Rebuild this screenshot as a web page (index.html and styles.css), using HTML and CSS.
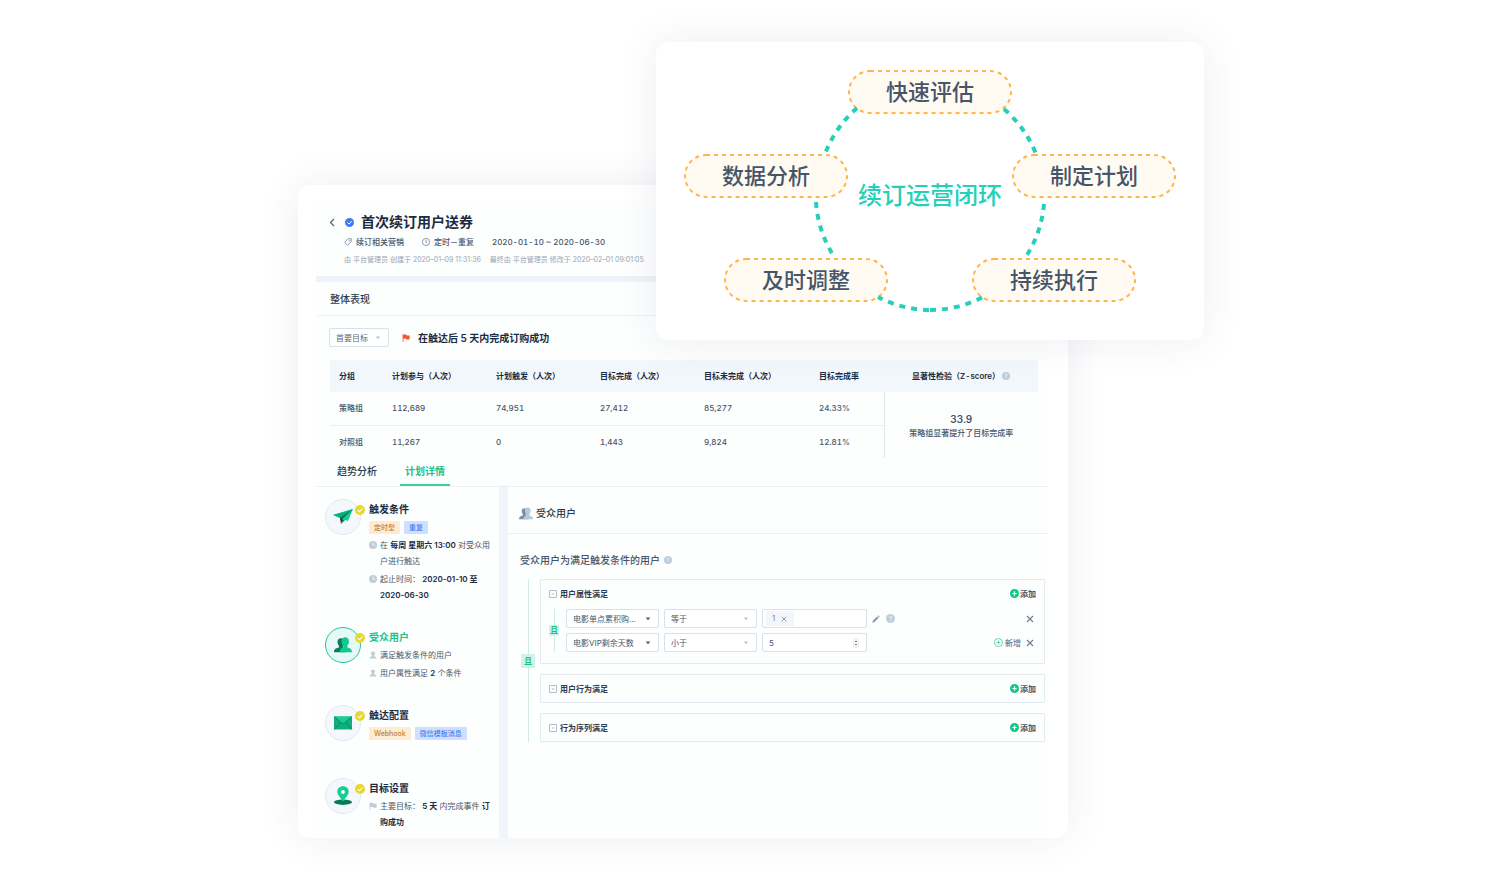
FILE: index.html
```html
<!DOCTYPE html>
<html lang="zh-CN">
<head>
<meta charset="utf-8">
<meta name="viewport" content="width=device-width, initial-scale=1">
<title>首次续订用户送券</title>
<link rel="stylesheet" href="styles.css">
</head>
<body>
<svg class="sprite" aria-hidden="true">
  <symbol id="i-check" viewBox="0 0 10 10"><circle cx="5" cy="5" r="5" fill="currentColor"/><path d="M2.7 5.1l1.7 1.7 3-3.3" fill="none" stroke="#fff" stroke-width="1.1"/></symbol>
  <symbol id="i-clock-solid" viewBox="0 0 8 8"><circle cx="4" cy="4" r="4" fill="currentColor"/><path d="M4 1.6V4.2H6.2" fill="none" stroke="#fff" stroke-width=".8"/></symbol>
  <symbol id="i-user" viewBox="0 0 8 8"><path d="M4 .4c1.300 0 2 .9 2 2.100 0 .9-.4 1.600-1 2v.7c1.500.4 2.500.8 2.500 2.400h-7c0-1.600 1-2 2.500-2.400v-.7c-.6-.4-1-1.100-1-2C2 1.300 2.700.4 4 .4z" fill="currentColor"/></symbol>
  <symbol id="i-help" viewBox="0 0 8 8"><circle cx="4" cy="4" r="4" fill="currentColor"/><path d="M2.900 3.200c0-.7.5-1.100 1.100-1.100s1.100.4 1.100 1c0 .7-1 .8-1 1.500M4.100 5.300v.8" fill="none" stroke="#fff" stroke-width=".7"/></symbol>
  <symbol id="i-plus" viewBox="0 0 9 9"><circle cx="4.500" cy="4.500" r="4.500" fill="#0bc98b"/><path d="M4.500 2.300v4.400M2.300 4.500h4.400" stroke="#fff" stroke-width="1.200"/></symbol>
  <symbol id="i-plus-line" viewBox="0 0 9 9"><circle cx="4.500" cy="4.500" r="4" fill="none" stroke="#3ecf9d" stroke-width=".8"/><path d="M4.500 2.500v4M2.500 4.500h4" stroke="#3ecf9d" stroke-width=".8"/></symbol>
  <symbol id="i-close" viewBox="0 0 8 8"><path d="M1 1l6 6M7 1L1 7" stroke="currentColor" stroke-width="1.100"/></symbol>
  <symbol id="i-caret" viewBox="0 0 6 4"><path d="M.8.6h4.400L3 3.300z" fill="currentColor"/></symbol>
  <symbol id="i-minus-box" viewBox="0 0 8 8"><path d="M.5.5h7v7h-7zM2.700 4h2.600" fill="none" stroke="#a9b8c8" stroke-width=".9"/></symbol>
  <symbol id="i-pill" viewBox="0 0 164 44"><rect x="1" y="1" width="162" height="42" rx="21" fill="#fffaf2" stroke="#ffb44c" stroke-width="2" stroke-dasharray="4 4"/></symbol>
  <symbol id="i-people" viewBox="0 0 16 14"><path d="M6.200.900c1.900 0 3 1.300 3 3.300 0 1.500-.5 2.700-1.300 3.500v1.600c2 .5 3.100 1.600 3.100 4.200H0c0-2.600 1.300-3.500 4.400-4.200V7.700C3.600 6.900 3.100 5.700 3.100 4.200c0-2 1.100-3.300 3.100-3.300z" fill="var(--back)"/><path d="M10 .2c2.200 0 3.300 1.500 3.300 3.700 0 1.500-.5 2.800-1.400 3.600V9.200c2.600.6 4.100 1.500 4.100 4.300H5.200c0-2.800.9-3.700 3-4.300V7.500C7.300 6.700 6.800 5.400 6.800 3.900 6.800 1.700 7.900.2 10 .2z" fill="var(--front)"/></symbol>
</svg>

<div class="stage">
  <main class="panel">
    <div class="content">
      <header class="head">
        <div class="head-title">
          <button class="bare back" aria-label="返回"><svg class="i6x9" viewBox="0 0 6 9"><path d="M5 1L1.500 4.500 5 8" fill="none" stroke="currentColor" stroke-width="1.200"/></svg></button>
          <svg class="i9 blue"><use href="#i-check"/></svg>
          <h1>首次续订用户送券</h1>
        </div>
        <div class="head-meta">
          <span class="meta"><svg class="i8" viewBox="0 0 8 8"><path d="M4.100.8L7.300.6 7.200 3.700 3.600 7.300.7 4.300z" fill="none" stroke="currentColor" stroke-width=".8" stroke-linejoin="round"/><circle cx="5.500" cy="2.500" r=".6" fill="none" stroke="currentColor" stroke-width=".5"/></svg>续订相关营销</span>
          <span class="meta"><svg class="i8" viewBox="0 0 8 8"><circle cx="4" cy="4" r="3.600" fill="none" stroke="currentColor" stroke-width=".8"/><path d="M4 1.800v2.400l1.400.9" fill="none" stroke="currentColor" stroke-width=".8"/></svg>定时－重复</span>
          <span class="period">2020-01-10 ~ 2020-06-30</span>
        </div>
        <div class="head-log"><span>由 平台管理员 创建于 2020–01–09 11:31:36</span><span>最终由 平台管理员 修改于 2020–02–01 09:01:05</span></div>
      </header>

      <section class="overview">
        <h2 class="section-title">整体表现</h2>
        <div class="goal">
          <span class="select goal-select"><select aria-label="目标"><option>首要目标</option></select><svg class="caret pale"><use href="#i-caret"/></svg></span>
          <svg class="flag" viewBox="0 0 8 8"><path d="M.6.500h3.600l.5.9h2.900v4H4.500L4 4.800H1.400v3H.6z" fill="#ee5a2f"/></svg>
          <strong>在触达后 5 天内完成订购成功</strong>
        </div>
        <table class="stats">
          <colgroup><col class="c-name"><col class="c-num"><col class="c-num"><col class="c-num"><col class="c-wide"><col class="c-rate"><col class="c-score"></colgroup>
          <thead><tr><th>分组</th><th>计划参与（人次）</th><th>计划触发（人次）</th><th>目标完成（人次）</th><th>目标未完成（人次）</th><th>目标完成率</th><th class="score-head">显著性检验（Z-score）<svg class="i8 help grey"><use href="#i-help"/></svg></th></tr></thead>
          <tbody>
            <tr><td>策略组</td><td>112,689</td><td>74,951</td><td>27,412</td><td>85,277</td><td>24.33%</td><td class="score" rowspan="2"><b>33.9</b>策略组显著提升了目标完成率</td></tr>
            <tr><td>对照组</td><td>11,267</td><td>0</td><td>1,443</td><td>9,824</td><td>12.81%</td></tr>
          </tbody>
        </table>
      </section>

      <nav class="tabs"><button class="tab">趋势分析</button><button class="tab active">计划详情</button></nav>

      <div class="detail">
        <ol class="steps">
          <li class="step">
            <span class="disc"><svg class="art" viewBox="0 0 22 18"><path d="M1 7L21 1l-5 12-6-2z" fill="#14cf91"/><path d="M1 7L21 1 8 9.500z" fill="#0fae7b"/><path d="M8 9.500L21 1 10.500 11z" fill="#087a57"/><path d="M8 9.500l2.500 1.500L9 16z" fill="#101f2c"/><path d="M10.500 11l2.500 1-4 4z" fill="#087a57"/></svg><svg class="done"><use href="#i-check"/></svg></span>
            <div class="step-body">
              <h3>触发条件</h3>
              <div class="tags"><span class="tag amber">定时型</span><span class="tag azure">重复</span></div>
              <p><svg class="i8 grey"><use href="#i-clock-solid"/></svg><span>在 <b>每周 星期六 13:00</b> 对受众用户进行触达</span></p>
              <p><svg class="i8 grey"><use href="#i-clock-solid"/></svg><span>起止时间：&nbsp;<b>2020-01-10 至 2020-06-30</b></span></p>
            </div>
          </li>
          <li class="step current">
            <span class="disc"><svg class="art people-green" viewBox="0 0 22 18"><use href="#i-people" x="2" y="1" width="18" height="16"/></svg><svg class="done"><use href="#i-check"/></svg></span>
            <div class="step-body">
              <h3>受众用户</h3>
              <p><svg class="i8 grey"><use href="#i-user"/></svg><span>满足触发条件的用户</span></p>
              <p><svg class="i8 grey"><use href="#i-user"/></svg><span>用户属性满足 <b>2</b> 个条件</span></p>
            </div>
          </li>
          <li class="step">
            <span class="disc"><svg class="art" viewBox="0 0 22 18"><rect x="2" y="2.500" width="18" height="13" fill="#0fae7b"/><path d="M2 2.500h18L11 10z" fill="#14cf91"/><path d="M2 15.500l6.500-7.200M20 15.500l-6.500-7.200M2 2.500L11 10l9-7.500" fill="none" stroke="#087a57" stroke-width=".7"/></svg><svg class="done"><use href="#i-check"/></svg></span>
            <div class="step-body">
              <h3>触达配置</h3>
              <div class="tags"><span class="tag amber">Webhook</span><span class="tag azure">微信模板消息</span></div>
            </div>
          </li>
          <li class="step">
            <span class="disc"><svg class="art" viewBox="0 0 22 18"><ellipse cx="11" cy="15.200" rx="9" ry="2.700" fill="#087a57"/><path d="M11-.8c3.300 0 5.700 2.300 5.700 5.400 0 3.800-3.600 6.400-5.700 10.200C8.900 11 5.300 8.400 5.300 4.600 5.300 1.500 7.700-.8 11-.8z" fill="#14cf91"/><circle cx="11" cy="5" r="1.900" fill="#fff"/></svg><svg class="done"><use href="#i-check"/></svg></span>
            <div class="step-body">
              <h3>目标设置</h3>
              <p><svg class="i8 grey" viewBox="0 0 8 8"><path d="M.6.800h3.600l.5.9h2.900v4H4.500L4 5.100H1.400v2.700H.6z" fill="currentColor"/></svg><span>主要目标：&nbsp;<b>5 天</b> 内完成事件 <b>订购成功</b></span></p>
            </div>
          </li>
        </ol>

        <section class="audience">
          <h2 class="audience-title"><svg class="people-grey"><use href="#i-people"/></svg>受众用户</h2>
          <div class="audience-body">
            <h3 class="audience-label">受众用户为满足触发条件的用户<svg class="i8 grey"><use href="#i-help"/></svg></h3>
            <div class="tree">
              <div class="join"><span class="join-mark">且</span></div>
              <div class="groups">
                <div class="group">
                  <div class="group-head"><svg class="i8"><use href="#i-minus-box"/></svg><b>用户属性满足</b><button class="bare add"><svg class="i9"><use href="#i-plus"/></svg>添加</button></div>
                  <div class="rules">
                    <div class="join small"><span class="join-mark">且</span></div>
                    <div class="rule-list">
                      <div class="rule">
                        <span class="select"><select aria-label="属性"><option>电影单点累积购...</option></select><svg class="caret"><use href="#i-caret"/></svg></span>
                        <span class="select"><select aria-label="条件"><option>等于</option></select><svg class="caret pale"><use href="#i-caret"/></svg></span>
                        <span class="field"><span class="chip">1<button class="bare" aria-label="移除"><svg class="i6"><use href="#i-close"/></svg></button></span></span>
                        <button class="bare slate" aria-label="编辑"><svg class="i8" viewBox="0 0 8 8"><path d="M.3 7.700l.5-2L5 1.500 6.500 3 2.300 7.200zM5.500 1l.7-.7 1.500 1.500-.7.7z" fill="currentColor"/></svg></button>
                        <svg class="i9 grey hint"><use href="#i-help"/></svg>
                        <span class="rule-end"><button class="bare" aria-label="删除"><svg class="i8"><use href="#i-close"/></svg></button></span>
                      </div>
                      <div class="rule">
                        <span class="select"><select aria-label="属性"><option>电影VIP剩余天数</option></select><svg class="caret"><use href="#i-caret"/></svg></span>
                        <span class="select"><select aria-label="条件"><option>小于</option></select><svg class="caret pale"><use href="#i-caret"/></svg></span>
                        <span class="field"><input type="text" inputmode="numeric" value="5" aria-label="天数"><svg class="spin" viewBox="0 0 6 10"><rect x=".4" y=".4" width="5.200" height="9.200" rx="2.600" fill="#fff" stroke="#d5dce4" stroke-width=".7"/><path d="M1.600 4L3 2.400 4.400 4zM1.600 6L3 7.600 4.400 6z" fill="#5c6670"/></svg></span>
                        <span class="rule-end"><button class="bare new"><svg class="i9"><use href="#i-plus-line"/></svg>新增</button><button class="bare" aria-label="删除"><svg class="i8"><use href="#i-close"/></svg></button></span>
                      </div>
                    </div>
                  </div>
                </div>
                <div class="group"><div class="group-head"><svg class="i8"><use href="#i-minus-box"/></svg><b>用户行为满足</b><button class="bare add"><svg class="i9"><use href="#i-plus"/></svg>添加</button></div></div>
                <div class="group"><div class="group-head"><svg class="i8"><use href="#i-minus-box"/></svg><b>行为序列满足</b><button class="bare add"><svg class="i9"><use href="#i-plus"/></svg>添加</button></div></div>
              </div>
            </div>
          </div>
        </section>
      </div>
    </div>
  </main>

  <aside class="cycle">
    <div class="cycle-map">
      <ul>
        <li class="node n1"><svg><use href="#i-pill"/></svg><span>快速评估</span></li>
        <li class="node n2"><svg><use href="#i-pill"/></svg><span>制定计划</span></li>
        <li class="node n3"><svg><use href="#i-pill"/></svg><span>持续执行</span></li>
        <li class="node n4"><svg><use href="#i-pill"/></svg><span>及时调整</span></li>
        <li class="node n5"><svg><use href="#i-pill"/></svg><span>数据分析</span></li>
      </ul>
      <svg class="ring" viewBox="0 0 492 242" aria-hidden="true">
        <g fill="none" stroke="#24d0b8" stroke-width="4" stroke-dasharray="6 6">
          <path d="M173 38A114 114 0 0 0 141 84"/>
          <path d="M320 39A114 114 0 0 1 352 84"/>
          <path d="M132 132A114 114 0 0 0 151 188"/>
          <path d="M360 134A114 114 0 0 1 343 185"/>
          <path d="M245 240A114 114 0 0 1 194 227"/>
          <path d="M246 240A114 114 0 0 0 299 227"/>
        </g>
      </svg>
      <strong class="cycle-name">续订运营闭环</strong>
    </div>
  </aside>
</div>
</body>
</html>
```

FILE: styles.css
```css
* { box-sizing: border-box; }
body {
  margin: 0;
  background: #fff;
  color: #46566a;
  font: 8px/16px Inter, "Noto Sans CJK SC", sans-serif;
}
h1, h2, h3, p, ul, ol { margin: 0; padding: 0; font-weight: 500; }
ul, ol { list-style: none; }
svg { display: block; flex: none; }
b, strong { font-weight: 600; }
button, input, select { font: inherit; color: inherit; }
.sprite { position: absolute; width: 0; height: 0; }
.bare { display: inline-flex; align-items: center; padding: 0; border: 0; background: none; }

.i6 { width: 6px; height: 6px; }
.i8 { width: 8px; height: 8px; }
.i9 { width: 9px; height: 9px; }
.i6x9 { width: 6px; height: 9px; }
.grey { color: #bfccd9; }
.slate { color: #8b9bb0; }
.blue { color: #3e7bfa; }

.stage { position: relative; max-width: 906px; margin: 0 auto; padding: 185px 0 42px; }
.panel {
  width: 85%;
  padding: 20px 20px 0 18px;
  border-radius: 12px;
  background: #fff;
  box-shadow: 0 0 40px rgba(50, 70, 110, .09);
}
.content { background: #fdfefe; }

/* header */
.head { padding: 7px 14px 8px 13px; border-bottom: 6px solid #eff3f7; }
.head-title { display: flex; align-items: center; height: 20px; }
.head-title h1 { margin-left: 7px; font-size: 14px; line-height: 20px; font-weight: 600; color: #1c2b3e; }
.back { width: 16px; color: #55647a; }
.head-meta { display: flex; align-items: center; gap: 18px; height: 20px; padding-left: 15px; }
.meta { display: flex; align-items: center; gap: 4px; font-weight: 500; }
.meta svg { color: #75859a; }
.period { font-variant-numeric: tabular-nums; font-weight: 500; }
.head-log { display: flex; gap: 9px; padding-left: 15px; font-size: 7px; color: #98a5b5; line-height: 16px; }

/* overview */
.section-title { padding: 9px 14px 8px; border-bottom: 1px solid #eff3f7; font-size: 10px; line-height: 16px; color: #2b3b4f; }
.goal { display: flex; align-items: center; padding: 12px 13px 13px; color: #1c2b3e; font-size: 10px; }
.goal .flag { width: 8px; height: 8px; margin: 0 8px 0 13px; }
.select { position: relative; display: flex; align-items: center; }
.select select {
  width: 100%;
  height: 19px;
  padding: 0 6px;
  border: 1px solid #d8e0ea;
  border-radius: 2px;
  background: #fff;
  appearance: none;
}
.goal-select { width: 60px; font-size: 8px; color: #5a687a; }
.caret { position: absolute; right: 8px; width: 6px; height: 4px; color: #46566a; pointer-events: none; }
.pale { color: #b8c4d0; }

.stats { width: calc(100% - 24px); margin-left: 14px; border-collapse: collapse; table-layout: fixed; font-variant-numeric: tabular-nums; }
.c-name { width: 53px; }
.c-num { width: 104px; }
.c-wide { width: 115px; }
.c-rate { width: 74px; }
.stats th, .stats td { padding: 0 0 0 9px; text-align: left; white-space: nowrap; }
.stats th { height: 32px; background: #f2f7fc; color: #1c2b3e; font-weight: 600; }
.stats td { height: 33px; font-weight: 500; }
.stats tbody tr:first-child td { border-bottom: 1px solid #e9eef3; }
.stats .score-head, .stats tbody tr .score { padding: 0; text-align: center; }
.stats tbody tr:first-child .score { border-bottom: 0; border-left: 1px solid #e2e8ef; line-height: 13px; }
.score b { display: block; font-size: 10px; line-height: 16px; }
.help { display: inline-block; vertical-align: -1px; margin-left: 2px; }

.tabs { display: flex; gap: 18px; padding-left: 16px; border-bottom: 1px solid #edf1f7; }
.tab { width: 50px; height: 28px; padding: 0; border: 0; border-bottom: 2px solid transparent; background: none; font-size: 10px; font-weight: 500; color: #2b3b4f; white-space: nowrap; }
.tab.active { color: #1fc08d; border-color: #3fcfa0; font-weight: 600; }

/* plan detail */
.detail { display: grid; grid-template-columns: 192px 1fr; }
.steps { padding: 12px 6px 0 9px; border-right: 9px solid #f1f5fa; }
.step { display: flex; gap: 8px; min-height: 73px; padding-bottom: 22px; }
.step:last-child { min-height: 0; padding-bottom: 6px; }
.disc {
  position: relative;
  display: flex;
  flex: none;
  align-items: center;
  justify-content: center;
  width: 36px;
  height: 36px;
  border: 1px solid #e3e9f0;
  border-radius: 50%;
  background: #f4f8fc;
}
.current .disc { border-color: #20c793; background: #e7f9f7; }
.art { width: 22px; height: 18px; overflow: visible; }
.people-green { --back: #0b7d5a; --front: #12c98d; }
.done { position: absolute; top: 5px; right: -5px; width: 10px; height: 10px; color: #e8d72e; }
.step-body { flex: 1; padding-top: 3px; }
.step-body h3 { margin-bottom: 3px; font-size: 10px; line-height: 14px; font-weight: 600; color: #1c2b3e; }
.current h3 { color: #16c48c; }
.step-body p { display: flex; gap: 3px; margin-bottom: 2px; font-weight: 400; }
.step-body p svg { margin-top: 4px; }
.step-body p b { color: #1c2b3e; }
.tags { display: flex; gap: 4px; padding: 2px 0 3px; }
.tag { padding: 0 5px; border-radius: 1px; font-size: 7px; line-height: 13px; font-weight: 500; white-space: nowrap; }
.amber { background: #feecd2; color: #c08432; }
.azure { background: #cfdffe; color: #4a7ff0; }
.step .step-body .current { color: #16c48c; }
.step.current .step-body h3 { color: #16c48c; }

/* audience */
.audience-title { display: flex; align-items: center; gap: 3px; height: 47px; padding: 6px 11px 0; border-bottom: 1px solid #edf1f7; font-size: 10px; color: #2b3b4f; }
.people-grey { width: 14px; height: 13px; --back: #7d8fa6; --front: #b9c8d8; }
.audience-body { padding: 18px 3px 0 12px; }
.audience-label { display: flex; align-items: center; gap: 4px; margin-bottom: 11px; font-size: 10px; line-height: 16px; color: #46566a; }
.tree { display: flex; gap: 4px; }
.join { display: flex; align-items: center; justify-content: center; width: 16px; background: linear-gradient(#cfeee3, #cfeee3) center / 1px 100% no-repeat; }
.join-mark { width: 14px; border-radius: 1px; background: #d2f1e8; color: #19c27f; text-align: center; line-height: 14px; font-weight: 600; }
.join.small { width: 10px; }
.small .join-mark { width: 10px; line-height: 11px; }
.groups { display: flex; flex: 1; flex-direction: column; gap: 10px; }
.group { padding: 0 8px; border: 1px solid #e4eaf1; border-radius: 1px; }
.group-head { display: flex; align-items: center; gap: 3px; height: 27px; color: #2b3b4f; }
.add { gap: 1px; margin-left: auto; font-weight: 600; color: #46566a; }
.rules { display: flex; gap: 7px; padding: 2px 0 11px; }
.rule-list { display: flex; flex: 1; flex-direction: column; gap: 5px; }
.rule { display: flex; align-items: center; gap: 5px; }
.rule .select { width: 93px; }
.field { display: flex; align-items: center; width: 105px; height: 19px; padding: 0 3px; border: 1px solid #d8e0ea; border-radius: 2px; background: #fff; }
.field input { flex: 1; min-width: 0; padding: 0 3px; border: 0; background: none; outline: none; }
.spin { width: 6px; height: 10px; margin-right: 4px; }
.chip { display: flex; align-items: center; gap: 6px; padding: 0 7px 0 6px; background: #f2f6fa; color: #7d8b9c; line-height: 15px; }
.hint { margin-left: 1px; }
.rule-end { display: flex; gap: 5px; align-items: center; margin-left: auto; padding-right: 2px; color: #6d7c90; }
.new { gap: 2px; font-weight: 500; }

/* cycle card */
.cycle {
  position: absolute;
  top: 42px;
  right: 0;
  width: 548px;
  padding: 28px;
  border-radius: 12px;
  background: #fff;
  box-shadow: 0 0 40px rgba(50, 70, 110, .09);
}
.cycle-map { position: relative; height: 242px; }
.ring { position: absolute; inset: 0; width: 492px; height: 242px; }
.node { position: absolute; width: 164px; height: 44px; color: #475569; font-size: 22px; line-height: 44px; font-weight: 500; text-align: center; }
.node svg { position: absolute; width: 164px; height: 44px; }
.node span { position: relative; }
.n1 { left: 164px; top: 0; }
.n2 { left: 328px; top: 84px; }
.n3 { left: 288px; top: 188px; }
.n4 { left: 40px; top: 188px; }
.n5 { left: 0; top: 84px; }
.cycle-name { position: absolute; left: 164px; top: 108px; width: 164px; color: #24d0b8; font-size: 24px; line-height: 36px; font-weight: 500; text-align: center; }
```
